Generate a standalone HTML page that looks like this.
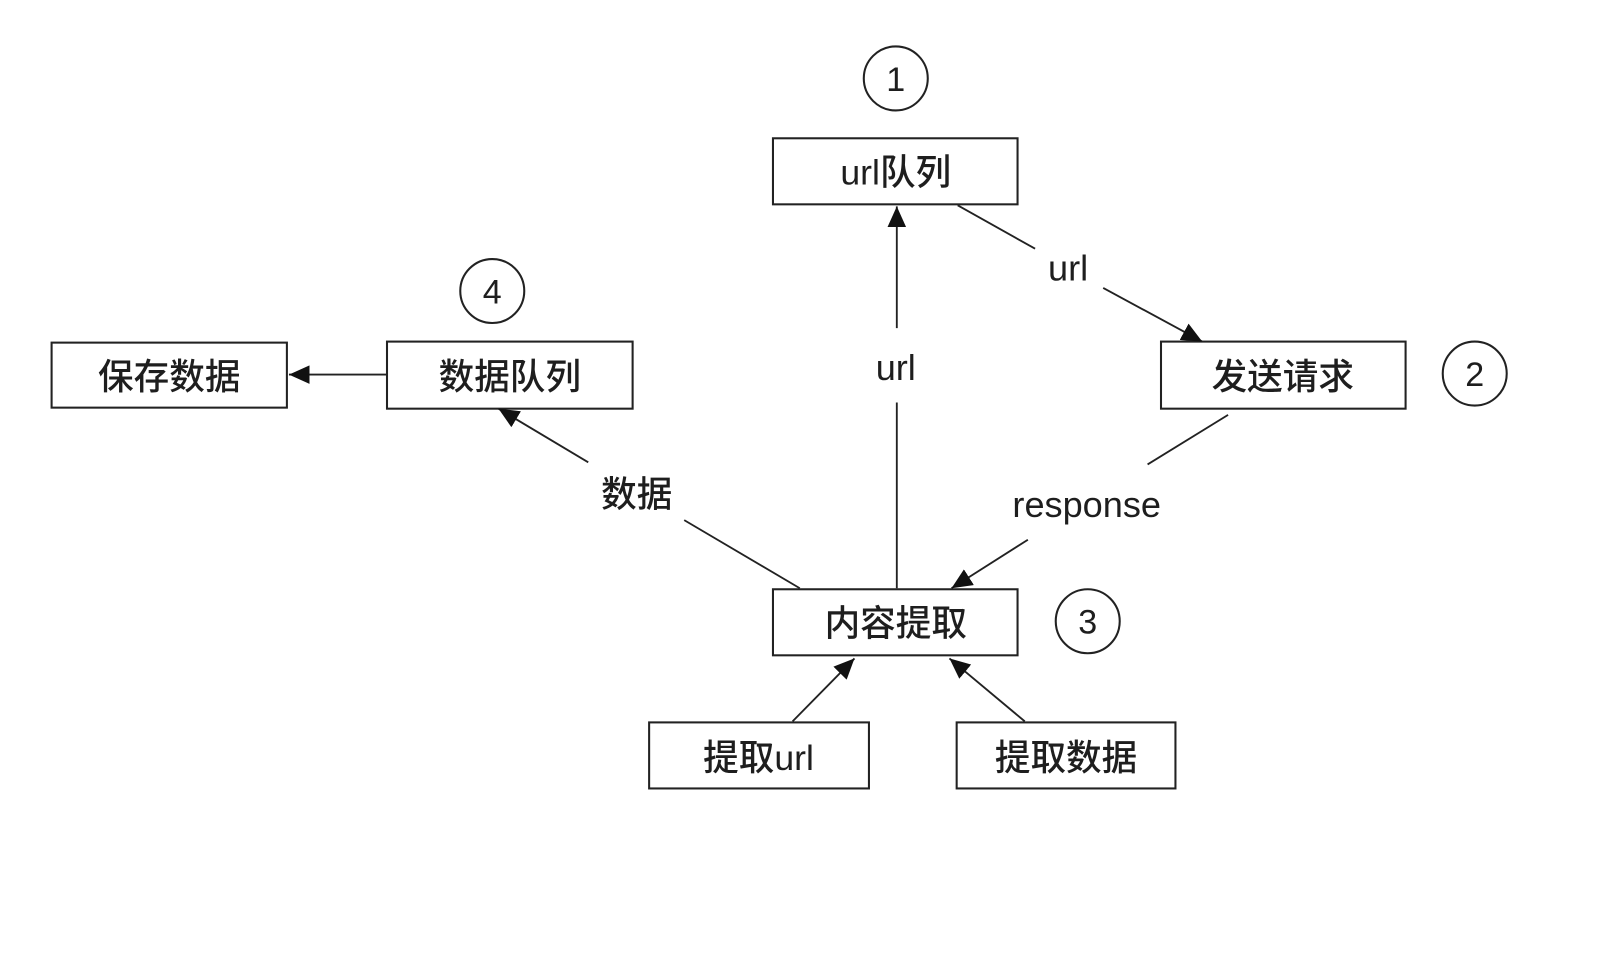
<!DOCTYPE html>
<html><head><meta charset="utf-8"><style>
html,body{margin:0;padding:0;background:#fff;width:1620px;height:956px;overflow:hidden}
svg text{font-family:"Liberation Sans","Noto Sans CJK SC",sans-serif;fill:#1e1e1e;text-anchor:middle}
.cj{font-weight:500}
</style></head><body>
<svg width="1620" height="956" viewBox="0 0 1620 956" xmlns="http://www.w3.org/2000/svg">
<defs>
<marker id="b" markerWidth="22" markerHeight="18" refX="20" refY="9" orient="auto" markerUnits="userSpaceOnUse"><path d="M0,0 L20,9 L0,18 z" fill="#111"/></marker></defs>
<g transform="scale(1.032)">
<g fill="none" stroke="#222" stroke-width="2">
<rect x="749" y="134" width="237" height="64"/>
<rect x="50" y="332" width="228" height="63"/>
<rect x="375" y="331" width="238" height="65"/>
<rect x="1125" y="331" width="237" height="65"/>
<rect x="749" y="571" width="237" height="64"/>
<rect x="629" y="700" width="213" height="64"/>
<rect x="927" y="700" width="212" height="64"/>
<circle cx="868" cy="76" r="31"/>
<circle cx="1429" cy="362" r="31"/>
<circle cx="477" cy="282" r="31"/>
<circle cx="1054" cy="602" r="31"/>
</g>
<g stroke="#222" stroke-width="1.8" fill="none">
<line x1="869" y1="570" x2="869" y2="390"/>
<line x1="869" y1="318" x2="869" y2="200" marker-end="url(#b)"/>
<line x1="928" y1="199" x2="1003" y2="241"/>
<line x1="1069" y1="279" x2="1165" y2="331" marker-end="url(#b)"/>
<line x1="1190" y1="402" x2="1112" y2="450"/>
<line x1="996" y1="523" x2="922" y2="570" marker-end="url(#b)"/>
<line x1="775" y1="570" x2="663" y2="504"/>
<line x1="570" y1="448" x2="483" y2="396" marker-end="url(#b)"/>
<line x1="375" y1="363" x2="280" y2="363" marker-end="url(#b)"/>
<line x1="768" y1="699" x2="828" y2="638" marker-end="url(#b)"/>
<line x1="993" y1="699" x2="920" y2="638" marker-end="url(#b)"/>
</g>
<g font-size="34.5" class="cj">
<text x="868" y="179">url队列</text>
<text x="164" y="377">保存数据</text>
<text x="494" y="377">数据队列</text>
<text x="1243" y="377">发送请求</text>
<text x="868" y="616">内容提取</text>
<text x="735" y="746">提取url</text>
<text x="1033" y="746">提取数据</text>
<text x="617" y="491">数据</text>
</g>
<g font-size="35">
<text x="868" y="368">url</text>
<text x="1035" y="272">url</text>
<text x="1053" y="501">response</text>
</g>
<g font-size="33">
<text x="868" y="88">1</text>
<text x="1429" y="374">2</text>
<text x="477" y="294">4</text>
<text x="1054" y="614">3</text>
</g>
</g>
</svg>
</body></html>
